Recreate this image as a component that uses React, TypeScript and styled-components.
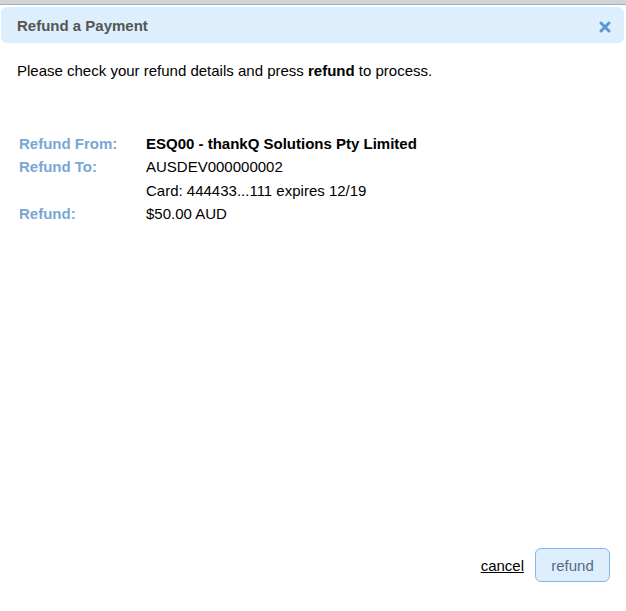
import styled, { createGlobalStyle } from 'styled-components'

const GlobalStyle = createGlobalStyle`
  html, body {
    margin: 0;
    padding: 0;
    background: #ffffff;
  }
  body {
    font-family: "Liberation Sans", Arial, sans-serif;
    font-size: 15px;
    color: #000000;
  }
`

const rows: { label: string, values: string[], strong?: boolean }[] = [
  { label: 'Refund From:', values: ['ESQ00 - thankQ Solutions Pty Limited'], strong: true },
  { label: 'Refund To:', values: ['AUSDEV000000002', 'Card: 444433...111 expires 12/19'] },
  { label: 'Refund:', values: ['$50.00 AUD'] }
]

const App: React.FC = () => (
  <>
    <GlobalStyle />
    <Page>
      <TopStrip />
      <Dialog>
        <Header>
          <Title>Refund a Payment</Title>
          <Close aria-label="close">
            <svg width="12" height="12" viewBox="0 0 12 12">
              <path d="M2 2 L10 10 M10 2 L2 10" stroke="#5b98cf" strokeWidth="3" strokeLinecap="round" />
            </svg>
          </Close>
        </Header>
        <Body>
          <Intro>Please check your refund details and press <b>refund</b> to process.</Intro>
          <Details>
            {rows.map(row => <Row key={row.label}>
              <Label>{row.label}</Label>
              <Values>
                {row.values.map(v => <Value key={v} $strong={row.strong}>{v}</Value>)}
              </Values>
            </Row>)}
          </Details>
        </Body>
        <Footer>
          <CancelLink href="#">cancel</CancelLink>
          <RefundButton>refund</RefundButton>
        </Footer>
      </Dialog>
    </Page>
  </>
)

export default App

const Page = styled.div`
  width: 626px;
  height: 611px;
  display: flex;
  flex-direction: column;
  overflow: hidden;
`
const TopStrip = styled.div`
  height: 4px;
  background: #d3d3d3;
  border-bottom: 1px solid #8eb3d6;
  flex-shrink: 0;
`
const Dialog = styled.div`
  flex: 1;
  display: flex;
  flex-direction: column;
  padding: 2px 2px 0 1px;
`
const Header = styled.div`
  height: 36px;
  display: flex;
  align-items: center;
  justify-content: space-between;
  padding: 0 13px 0 16px;
  background: #ddeefc;
  border-radius: 6px;
`
const Title = styled.h1`
  margin: 0;
  font-size: 15px;
  font-weight: bold;
  color: #555555;
`
const Close = styled.span`
  display: flex;
  align-items: center;
  margin-top: 3px;
`
const Body = styled.div`
  flex: 1;
  padding: 19px 16px 0 16px;
`
const Intro = styled.p`
  margin: 0 0 52px 0;
  font-size: 15px;
  line-height: 18px;
`
const Details = styled.div`
  display: flex;
  flex-direction: column;
  padding-left: 2px;
`
const Row = styled.div`
  display: grid;
  grid-template-columns: 127px 1fr;
`
const Label = styled.div`
  font-weight: bold;
  color: #79a7d5;
  line-height: 23.4px;
`
const Values = styled.div`
  display: flex;
  flex-direction: column;
`
const Value = styled.div<{ $strong?: boolean }>`
  line-height: 23.4px;
  font-weight: ${p => p.$strong ? 'bold' : 'normal'};
`
const Footer = styled.div`
  display: flex;
  justify-content: flex-end;
  align-items: center;
  gap: 11px;
  padding: 0 14px 29px 0;
`
const CancelLink = styled.a`
  color: #000000;
  text-decoration: underline;
  font-size: 15px;
`
const RefundButton = styled.button`
  width: 75px;
  height: 34px;
  border: 1px solid #8bb6df;
  border-radius: 6px;
  background: #ddeefc;
  color: #56698c;
  font-family: inherit;
  font-size: 15px;
  cursor: pointer;
`
